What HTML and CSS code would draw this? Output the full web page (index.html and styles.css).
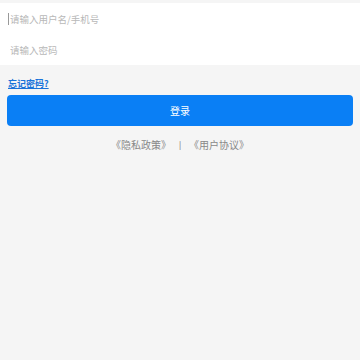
FILE: index.html
```html
<!DOCTYPE html>
<html lang="zh">
<head>
    <meta charset="UTF-8">
    <meta name="viewport" content="width=device-width, initial-scale=1.0">
    <title>登录</title>
    <link rel="stylesheet" href="styles.css">
</head>
<body>

    <!-- 登录表单 -->
    <div class="form-box">
        <div class="field">
            <span class="caret"></span>
            <input type="text" placeholder="请输入用户名/手机号">
        </div>
        <div class="field">
            <input type="password" placeholder="请输入密码">
        </div>
    </div>

    <div class="forgot">
        <a href="#">忘记密码?</a>
    </div>

    <button class="btn-login">登录</button>

    <div class="agreement">
        <a href="#">《隐私政策》</a>
        <span class="divider">|</span>
        <a href="#">《用户协议》</a>
    </div>

</body>
</html>
```

FILE: styles.css
```css
body {
    font-family: "Noto Sans CJK SC", "Noto Sans", sans-serif;
    background-color: #f5f5f5;
    margin: 0;
    padding: 0;
    height: 360px;
}

.form-box {
    margin-top: 3px;
    background-color: white;
    padding: 0;
}

.field {
    position: relative;
    height: 31px;
    display: flex;
    align-items: center;
    padding-left: 10px;
}

.field input {
    border: none;
    outline: none;
    background: transparent;
    padding: 0;
    font-family: inherit;
    font-size: 9.5px;
    width: 100%;
}

.field input::placeholder {
    color: #b8b8b8;
}

.caret {
    position: absolute;
    left: 8px;
    top: 10px;
    width: 1px;
    height: 12px;
    background-color: #999;
}

.forgot {
    padding: 8px 8px 0;
    height: 22px;
    line-height: 14px;
}

.forgot a {
    font-size: 9px;
    font-weight: bold;
    color: #1a73d9;
    text-decoration: underline;
}

.btn-login {
    display: block;
    width: calc(100% - 14px);
    margin: 0 6px 0 7px;
    height: 31px;
    border: none;
    border-radius: 4px;
    background-color: #0a7ff5;
    color: white;
    font-family: inherit;
    font-size: 10px;
    cursor: pointer;
}

.agreement {
    display: flex;
    justify-content: center;
    align-items: center;
    gap: 8px;
    margin-top: 11px;
    font-size: 10px;
    color: #888;
}

.agreement a {
    color: #888;
    text-decoration: none;
}

.divider {
    font-size: 8px;
    color: #666;
}
```
